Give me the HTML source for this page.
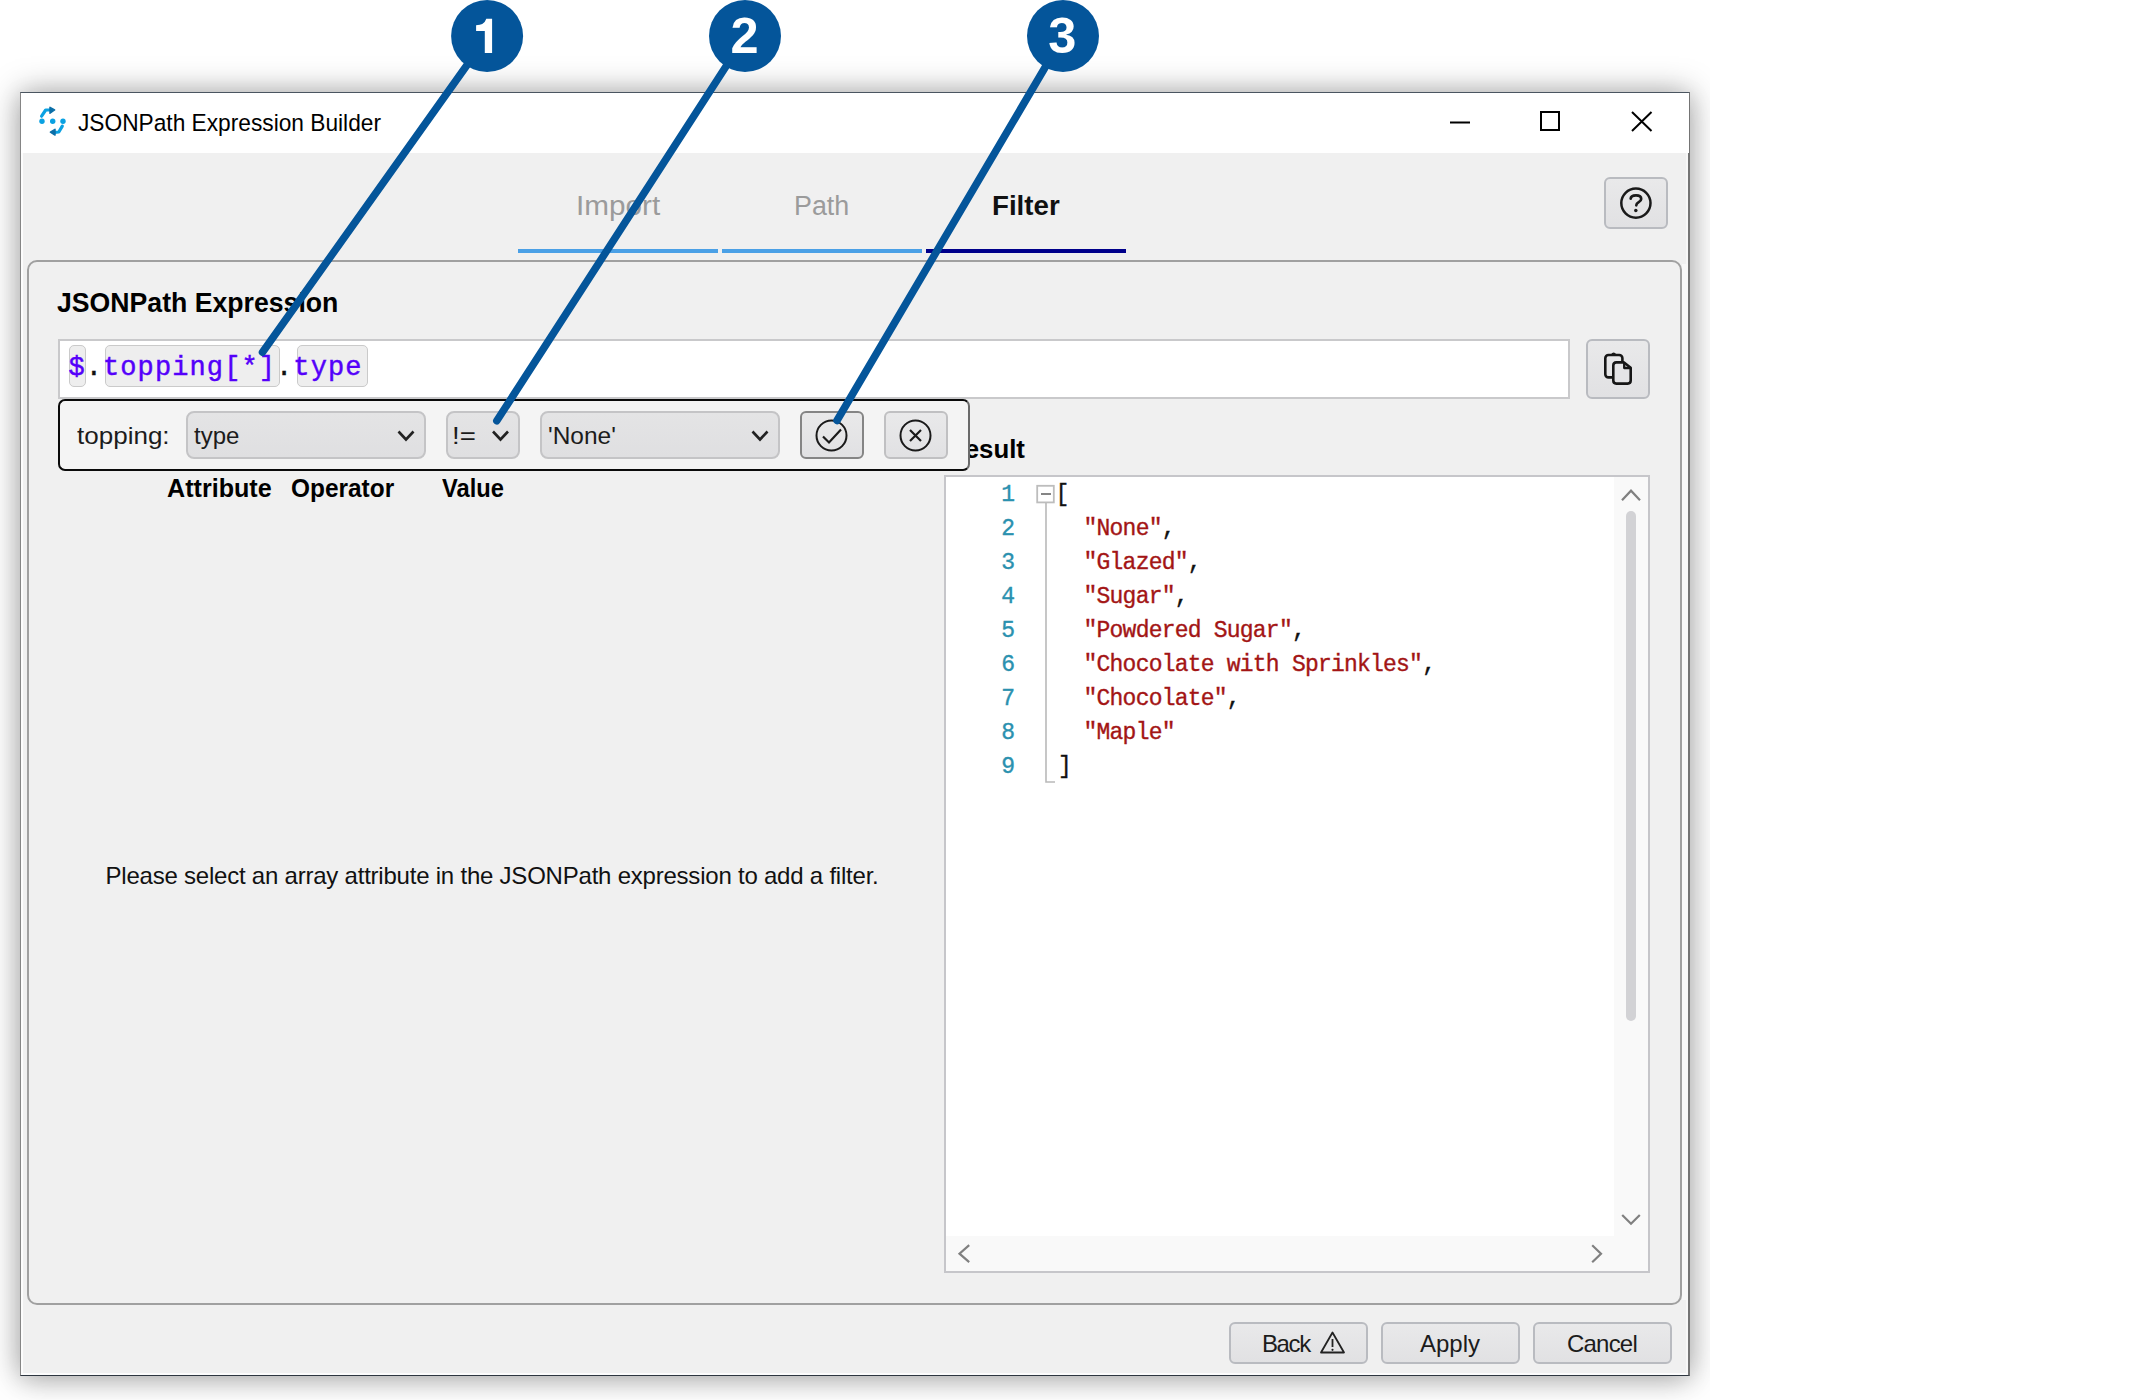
<!DOCTYPE html>
<html>
<head>
<meta charset="utf-8">
<title>JSONPath Expression Builder</title>
<style>
*{box-sizing:border-box;margin:0;padding:0}
html,body{width:2142px;height:1400px;background:#fff;overflow:hidden}
body{font-family:"Liberation Sans",sans-serif;color:#000;position:relative}
.abs{position:absolute}
.t{position:absolute;white-space:nowrap;line-height:1;transform-origin:0 0}
#clip{position:absolute;left:0;top:0;width:1710px;height:1400px;overflow:hidden}
#win{position:absolute;left:20px;top:92px;width:1670px;height:1284px;background:#f0f0f0;
 border:1px solid #6e7278;border-right-width:2px;border-top-color:#4a5560;border-bottom-color:#2e3640;border-left-color:#858585;border-right-color:#747474;box-shadow:inset 2px 0 0 #fcfcfc,inset -2px 0 0 #f7f7f7,inset 0 -2px 0 #fcfcfc,0 0 30px 0 rgba(0,0,0,.34),0 5px 24px rgba(0,0,0,.11)}
#titlebar{position:absolute;left:0;top:0;width:1668px;height:60px;background:#fff}
.btn{position:absolute;border:2px solid #b9bbc0;border-radius:6px;background:linear-gradient(#e9e9ea,#e1e1e3);}
.sel{position:absolute;border:2px solid #c4c4c6;border-radius:8px;background:linear-gradient(#e4e4e5,#dfdfe1)}
.tok{position:absolute;border:1.5px solid #cacaca;border-radius:5px;background:#eeeeee}
.mono{font-family:"Liberation Mono",monospace}
.ln{position:absolute;left:0;width:1014.3px;text-align:right;color:#2b91af;font-family:"Liberation Mono",monospace;font-size:23px;letter-spacing:-0.78px;line-height:34px;height:34px}
.cl{position:absolute;left:1057.5px;color:#a31515;font-family:"Liberation Mono",monospace;font-size:23px;letter-spacing:-0.78px;line-height:34px;height:34px;white-space:pre}
.cl b{font-weight:normal;color:#111}
.cl,.ln{-webkit-text-stroke:0.35px currentColor}
.dg{position:absolute;top:14px;width:72px;text-align:center;color:#fff;font-weight:bold;font-size:45px;line-height:45px;font-family:"Liberation Sans",sans-serif}
</style>
</head>
<body>
<div id="clip">
<div id="win">
 <div id="titlebar"></div>
</div>
</div>

<!-- everything else positioned in page coordinates -->
<div id="ui" class="abs" style="left:0;top:0;width:2142px;height:1400px">

<!-- title icon -->
<svg class="abs" style="left:36px;top:104px" width="34" height="34" viewBox="36 104 34 34">
 <circle cx="42" cy="121.2" r="2.700" fill="#0aa1e2"/>
 <circle cx="52.700" cy="121.2" r="2.700" fill="#0aa1e2"/>
 <circle cx="63" cy="121.2" r="2.700" fill="#0aa1e2"/>
 <path d="M41.6 116.2 L45.7 110 L50.5 110" fill="none" stroke="#0aa1e2" stroke-width="3.2" stroke-linejoin="round" stroke-linecap="round"/>
 <path d="M50 107.300 L54.600 110 L50 113.2 Z" fill="#0b6fa8" stroke="#0b6fa8" stroke-width="1.5" stroke-linejoin="round"/>
 <path d="M62.300 126.2 L58.800 132 L54.600 132.3" fill="none" stroke="#0aa1e2" stroke-width="3.2" stroke-linejoin="round" stroke-linecap="round"/>
 <path d="M55 129.300 L50.400 132.2 L55 135 Z" fill="#0b6fa8" stroke="#0b6fa8" stroke-width="1.5" stroke-linejoin="round"/>
</svg>
<div class="t" id="title" style="left:78px;top:111.3px;font-size:24.5px;transform:scaleX(0.927)">JSONPath Expression Builder</div>

<!-- window controls -->
<svg class="abs" style="left:1440px;top:100px" width="230" height="44" viewBox="1440 100 230 44">
 <path d="M1450 122.5 H1470" stroke="#000" stroke-width="2"/>
 <rect x="1541" y="112" width="18" height="18" fill="none" stroke="#000" stroke-width="2"/>
 <path d="M1632 112 L1651.5 131 M1651.5 112 L1632 131" stroke="#000" stroke-width="2"/>
</svg>

<!-- tabs -->
<div class="t" id="tab1" style="left:575.9px;top:193.44px;font-size:27px;color:#9b9b9b;transform:scaleX(1.1)">Import</div>
<div class="t" id="tab2" style="left:794.2px;top:193.44px;font-size:27px;color:#9b9b9b;transform:scaleX(0.995)">Path</div>
<div class="t" id="tab3" style="left:992.2px;top:193.44px;font-size:27px;font-weight:bold;color:#111;transform:scaleX(1.025)">Filter</div>
<div class="abs" style="left:518px;top:249px;width:200px;height:4px;background:#4aa0e6"></div>
<div class="abs" style="left:722px;top:249px;width:200px;height:4px;background:#4aa0e6"></div>
<div class="abs" style="left:926px;top:249px;width:200px;height:4px;background:#00008b"></div>

<!-- help button -->
<div class="btn" style="left:1604px;top:177px;width:64px;height:52px"></div>
<svg class="abs" style="left:1616px;top:184px" width="40" height="40" viewBox="0 0 40 40">
 <circle cx="19.900" cy="19.100" r="14.6" fill="none" stroke="#1a1a1a" stroke-width="2.500"/>
 <path d="M14.700 14.600 C15 10.3 25.2 10 25.2 15 C25.2 18.4 20.3 18 20.3 21.300" fill="none" stroke="#1a1a1a" stroke-width="2.700" stroke-linecap="round"/>
 <circle cx="19.800" cy="26.400" r="1.750" fill="#1a1a1a"/>
</svg>

<!-- group panel -->
<div class="abs" style="left:1682px;top:264px;width:6px;height:1036px;background:#f8f8f8"></div>
<div class="abs" style="left:27px;top:260px;width:1655px;height:1045px;border:2px solid #a0a0a0;border-radius:10px"></div>

<div class="t" id="h1" style="left:56.8px;top:287.87px;font-size:28.5px;font-weight:bold;transform:scaleX(0.935)">JSONPath Expression</div>

<!-- expression input -->
<div class="abs" style="left:58px;top:339px;width:1512px;height:60px;background:#fff;border:2px solid #c9c9cb"></div>
<div class="tok" style="left:69px;top:345px;width:17px;height:41.500px"></div>
<div class="tok" style="left:105px;top:345px;width:175px;height:41.500px"></div>
<div class="tok" style="left:297px;top:345px;width:71px;height:41.500px"></div>
<div class="t mono" id="expr" style="left:68.400px;top:355.300px;font-size:27px;letter-spacing:1.1px;color:#5400fa;-webkit-text-stroke:0.45px currentColor"><span>$</span><span style="color:#111">.</span><span>topping[*]</span><span style="color:#111">.</span><span>type</span></div>

<!-- copy button -->
<div class="btn" style="left:1586px;top:339px;width:64px;height:60px"></div>
<svg class="abs" style="left:1598px;top:348px" width="40" height="42" viewBox="0 0 40 42">
 <rect x="7.300" y="7" width="17.100" height="22.400" rx="3.2" fill="none" stroke="#161616" stroke-width="2.600"/>
 <path d="M13.400 6.800 Q15.600 3.2 17.900 6.800 Z" fill="#161616" stroke="#161616" stroke-width="1.2" stroke-linejoin="round"/>
 <path d="M18.300 14.400 H26 L32.700 19.700 V32.600 Q32.700 35.600 29.700 35.600 H18.300 Q15.300 35.600 15.300 32.600 V17.400 Q15.300 14.400 18.300 14.400 Z" fill="#e4e4e6" stroke="#161616" stroke-width="2.600" stroke-linejoin="round"/>
 <path d="M26.200 14.400 V20 H32.700" fill="none" stroke="#161616" stroke-width="2.3" stroke-linejoin="round"/>
</svg>

<!-- Result heading (partially covered) -->
<div class="t" id="res" style="left:946px;top:436.17px;font-size:26.5px;font-weight:bold;transform:scaleX(0.975)">Result</div>

<!-- filter popup -->
<div class="abs" style="left:58px;top:399px;width:912px;height:72px;background:#f4f4f4;border:2px solid #0a0a0a;border-right-color:#6a6a6a;border-radius:7px"></div>
<div class="t" id="lbl" style="left:77px;top:424.28px;font-size:24px;color:#1c1c1c;transform:scaleX(1.084)">topping:</div>
<div class="sel" style="left:186px;top:411px;width:240px;height:48px"></div>
<div class="t" id="s1" style="left:194px;top:424.48px;font-size:24px;color:#1c1c1c">type</div>
<div class="sel" style="left:446px;top:411px;width:74px;height:48px"></div>
<div class="t" id="s2" style="left:451.6px;top:424.48px;font-size:24px;color:#1c1c1c;transform:scaleX(1.15)">!=</div>
<div class="sel" style="left:540px;top:411px;width:240px;height:48px"></div>
<div class="t" id="s3" style="left:547.500px;top:424.48px;font-size:24px;color:#1c1c1c;transform:scaleX(1.02)">'None'</div>
<svg class="abs" style="left:390px;top:424px" width="400" height="24" viewBox="390 424 400 24">
 <path d="M398.5 431.5 L406 439.5 L413.5 431.5" fill="none" stroke="#222" stroke-width="2.6"/>
 <path d="M493 431.5 L500.5 439.5 L508 431.5" fill="none" stroke="#222" stroke-width="2.6"/>
 <path d="M752.5 431.5 L760 439.5 L767.5 431.5" fill="none" stroke="#222" stroke-width="2.6"/>
</svg>
<div class="btn" style="left:800px;top:411px;width:64px;height:48px;border:2px solid #858585"></div>
<div class="btn" style="left:884px;top:411px;width:64px;height:48px;border:2px solid #c0c0c2"></div>
<svg class="abs" style="left:810px;top:415px" width="130" height="40" viewBox="810 415 130 40">
 <circle cx="831.5" cy="435.5" r="15" fill="none" stroke="#1a1a1a" stroke-width="2"/>
 <path d="M823 436.5 L829 442.5 L841 429.5" fill="none" stroke="#1a1a1a" stroke-width="2.2"/>
 <circle cx="915.5" cy="435.5" r="15" fill="none" stroke="#1a1a1a" stroke-width="2"/>
 <path d="M910 430 L921 441 M921 430 L910 441" fill="none" stroke="#1a1a1a" stroke-width="2.2"/>
</svg>

<div class="t" id="a1" style="left:167px;top:475.84px;font-size:25px;font-weight:bold;transform:scaleX(1.005)">Attribute</div>
<div class="t" id="a2" style="left:291px;top:475.84px;font-size:25px;font-weight:bold;transform:scaleX(0.977)">Operator</div>
<div class="t" id="a3" style="left:442.4px;top:475.84px;font-size:25px;font-weight:bold;transform:scaleX(0.947)">Value</div>

<div class="t" id="msg" style="left:105.500px;top:864.200px;font-size:24px;letter-spacing:-0.22px;color:#111">Please select an array attribute in the JSONPath expression to add a filter.</div>

<!-- result editor -->
<div class="abs" style="left:944px;top:475px;width:706px;height:798px;background:#fff;border:2px solid #c6c6ca"></div>
<div class="abs" style="left:1614px;top:477px;width:34px;height:794px;background:#f9f9f9"></div>
<div class="abs" style="left:946px;top:1236px;width:702px;height:35px;background:#f9f9f9"></div>
<div class="abs" style="left:1626px;top:511px;width:10px;height:510px;border-radius:5px;background:#d2d2d5"></div>
<svg class="abs" style="left:946px;top:477px" width="702" height="794" viewBox="946 477 702 794">
 <path d="M1622 500.2 L1631 490.700 L1640 500.2" fill="none" stroke="#808080" stroke-width="2.2"/>
 <path d="M1622.2 1215 L1631 1223.800 L1639.800 1215" fill="none" stroke="#808080" stroke-width="2.2"/>
 <path d="M1592.2 1245.2 L1601 1253.700 L1592.2 1262.2" fill="none" stroke="#808080" stroke-width="2.2"/>
 <path d="M969.2 1245.2 L959.5 1253.700 L969.2 1262.2" fill="none" stroke="#808080" stroke-width="2.2"/>
 <rect x="1037.2" y="485.800" width="16.600" height="16.600" fill="#fff" stroke="#bdbdbd" stroke-width="1.8"/>
 <path d="M1041 494 H1051" stroke="#666" stroke-width="1.6"/>
 <path d="M1046 503 V782 H1055" fill="none" stroke="#b9b9b9" stroke-width="1.6"/>
</svg>
<div class="ln" style="top:478px">1</div>
<div class="ln" style="top:512px">2</div>
<div class="ln" style="top:546px">3</div>
<div class="ln" style="top:580px">4</div>
<div class="ln" style="top:614px">5</div>
<div class="ln" style="top:648px">6</div>
<div class="ln" style="top:682px">7</div>
<div class="ln" style="top:716px">8</div>
<div class="ln" style="top:750px">9</div>
<div class="cl" style="top:478px;margin-left:-2px"><b>[</b></div>
<div class="cl" style="top:512px">  "None"<b>,</b></div>
<div class="cl" style="top:546px">  "Glazed"<b>,</b></div>
<div class="cl" style="top:580px">  "Sugar"<b>,</b></div>
<div class="cl" style="top:614px">  "Powdered Sugar"<b>,</b></div>
<div class="cl" style="top:648px">  "Chocolate with Sprinkles"<b>,</b></div>
<div class="cl" style="top:682px">  "Chocolate"<b>,</b></div>
<div class="cl" style="top:716px">  "Maple"</div>
<div class="cl" style="top:750px;margin-left:0.5px"><b>]</b></div>

<!-- bottom buttons -->
<div class="btn" style="left:1229px;top:1322px;width:139px;height:42px"></div>
<div class="btn" style="left:1381px;top:1322px;width:139px;height:42px"></div>
<div class="btn" style="left:1533px;top:1322px;width:139px;height:42px"></div>
<div class="t" id="b1" style="left:1262px;top:1332px;font-size:24px;letter-spacing:-1.4px;color:#1c1c1c">Back</div>
<svg class="abs" style="left:1318px;top:1330px" width="30" height="26" viewBox="0 0 30 26">
 <path d="M14.5 2.5 L26 22.5 H3 Z" fill="none" stroke="#222" stroke-width="1.8" stroke-linejoin="round"/>
 <path d="M14.5 9 V17" stroke="#222" stroke-width="1.8"/>
 <circle cx="14.500" cy="19.800" r="1.100" fill="#222"/>
</svg>
<div class="t" id="b2" style="left:1420px;top:1332px;font-size:24px;color:#1c1c1c">Apply</div>
<div class="t" id="b3" style="left:1567px;top:1332px;font-size:24px;letter-spacing:-0.8px;color:#1c1c1c">Cancel</div>

<!-- callouts -->
<svg class="abs" style="left:0;top:0" width="1300" height="480" viewBox="0 0 1300 480">
 <g stroke="#04559a" stroke-width="7.5" stroke-linecap="round">
  <line x1="487" y1="37" x2="262.500" y2="352.200"/>
  <line x1="745" y1="37" x2="496.800" y2="420.800"/>
  <line x1="1063" y1="37" x2="837" y2="420.500"/>
 </g>
 <circle cx="487.1" cy="36" r="36" fill="#04559a"/>
 <circle cx="745" cy="36" r="36" fill="#04559a"/>
 <circle cx="1063" cy="36" r="36" fill="#04559a"/>
</svg>
<svg class="abs" style="left:440px;top:0" width="700" height="80" viewBox="440 0 700 80">
 <path d="M492.1 18.700 L492.1 52.900 L484.8 52.900 L484.8 31.050 L476.1 31.050 L476.1 25.200 Q484.2 25.200 486.3 18.700 Z" fill="#fff"/>
 <text x="744.6" y="52.900" text-anchor="middle" fill="#fff" style="font-family:'Liberation Sans',sans-serif;font-weight:bold;font-size:50.5px">2</text>
 <text x="1062.300" y="52.900" text-anchor="middle" fill="#fff" style="font-family:'Liberation Sans',sans-serif;font-weight:bold;font-size:50.5px">3</text>
</svg>

</div>
</body>
</html>
